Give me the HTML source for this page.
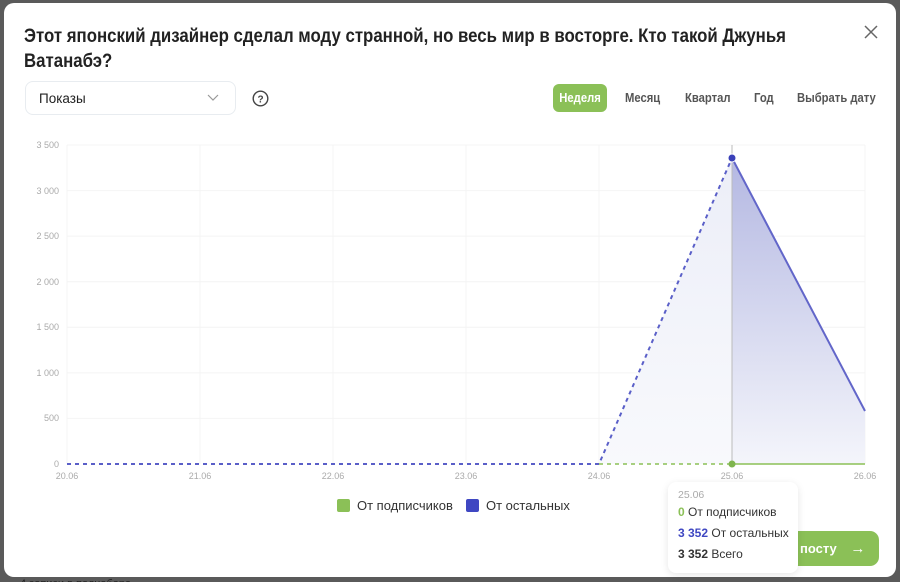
<!DOCTYPE html>
<html><head><meta charset="utf-8"><style>
*{margin:0;padding:0;box-sizing:border-box}
html,body{width:900px;height:582px;overflow:hidden}
body{background:#5a5a5a;font-family:"Liberation Sans",sans-serif;position:relative}
.m{position:absolute;left:4px;top:3px;width:892px;height:574px;background:#fff;border-radius:10px}
.t{position:absolute;left:24px;top:24px;font-size:19px;font-weight:bold;color:#222;line-height:25px;width:900px;transform:scaleX(0.885);transform-origin:0 0}
.sel{position:absolute;left:25px;top:81px;width:211px;height:34px;border:1px solid #e8ecf0;border-radius:8px;font-size:13.5px;color:#222;padding:9px 13px}
.tab{position:absolute;top:91px;font-size:12.5px;color:#555;font-weight:bold;white-space:nowrap;transform:scaleX(0.9);transform-origin:0 0}
.ax{font-size:9px;fill:#aaa;font-family:"Liberation Sans",sans-serif}
</style></head><body>
<div style="position:absolute;left:20px;top:578px;font-size:11px;color:#222">4 записи в поднабора</div>
<div class="m"></div>
<div class="t">Этот японский дизайнер сделал моду странной, но весь мир в восторге. Кто такой Джунья Ватанабэ?</div>
<svg style="position:absolute;left:864px;top:25px" width="14" height="14"><path d="M1 1L13 13M13 1L1 13" stroke="#666" stroke-width="1.5"/></svg>
<div class="sel">Показы</div>
<svg style="position:absolute;left:207px;top:94px" width="12" height="8"><path d="M1 1L6 6L11 1" stroke="#999" fill="none" stroke-width="1.2"/></svg>
<svg style="position:absolute;left:252px;top:90px" width="17" height="17"><circle cx="8.5" cy="8.5" r="7.3" stroke="#444" fill="none" stroke-width="1.4"/><text x="8.5" y="12.5" text-anchor="middle" font-size="10" font-weight="bold" fill="#444" font-family="Liberation Sans">?</text></svg>
<div style="position:absolute;left:553px;top:84px;width:54px;height:28px;background:#8bc057;border-radius:6px;color:#fff;font-size:12.5px;font-weight:bold;text-align:center;line-height:28px"><span style="display:inline-block;transform:scaleX(0.9)">Неделя</span></div>
<div class="tab" style="left:625px">Месяц</div>
<div class="tab" style="left:685px">Квартал</div>
<div class="tab" style="left:754px">Год</div>
<div class="tab" style="left:797px">Выбрать дату</div>
<svg style="position:absolute;left:0;top:0" width="900" height="582">
<defs><linearGradient id="g" x1="0" y1="0" x2="0" y2="1"><stop offset="0" stop-color="#b4b8e2"/><stop offset="1" stop-color="#f4f5fb"/></linearGradient>
<linearGradient id="g2" x1="0" y1="0" x2="0" y2="1"><stop offset="0" stop-color="#eceef8"/><stop offset="1" stop-color="#f8f9fc"/></linearGradient></defs>
<g stroke="#f4f4f4" stroke-width="1">
<line x1="67" y1="145" x2="865" y2="145"/><line x1="67" y1="190.6" x2="865" y2="190.6"/><line x1="67" y1="236.1" x2="865" y2="236.1"/><line x1="67" y1="281.7" x2="865" y2="281.7"/><line x1="67" y1="327.3" x2="865" y2="327.3"/><line x1="67" y1="372.9" x2="865" y2="372.9"/><line x1="67" y1="418.4" x2="865" y2="418.4"/>
<line x1="67" y1="145" x2="67" y2="464"/><line x1="200" y1="145" x2="200" y2="464"/><line x1="333" y1="145" x2="333" y2="464"/><line x1="466" y1="145" x2="466" y2="464"/><line x1="599" y1="145" x2="599" y2="464"/><line x1="865" y1="145" x2="865" y2="464"/>
</g>
<polygon points="599,464 732,158 732,464" fill="url(#g2)"/>
<polygon points="732,158 865,411 865,464 732,464" fill="url(#g)"/>
<line x1="732" y1="145" x2="732" y2="464" stroke="#bbb"/>
<polyline points="67,464 599,464 732,158" fill="none" stroke="#5a5fc8" stroke-width="2" stroke-dasharray="4,4"/>
<line x1="732" y1="158" x2="865" y2="411" stroke="#6266c9" stroke-width="2"/>
<line x1="599" y1="464" x2="732" y2="464" stroke="#8bc057" stroke-width="1.5" stroke-dasharray="4,4"/>
<line x1="732" y1="464" x2="865" y2="464" stroke="#8bc057" stroke-width="1.5"/>
<circle cx="732" cy="158" r="4" fill="#3a40b8" stroke="#fff" stroke-width="1"/>
<circle cx="732" cy="464" r="3.5" fill="#7fb54e"/>
<g class="ax" text-anchor="end">
<text x="59" y="148">3 500</text><text x="59" y="194">3 000</text><text x="59" y="239">2 500</text><text x="59" y="285">2 000</text><text x="59" y="330">1 500</text><text x="59" y="376">1 000</text><text x="59" y="421">500</text><text x="59" y="467">0</text></g>
<g class="ax" text-anchor="middle">
<text x="67" y="479">20.06</text><text x="200" y="479">21.06</text><text x="333" y="479">22.06</text><text x="466" y="479">23.06</text><text x="599" y="479">24.06</text><text x="732" y="479">25.06</text><text x="865" y="479">26.06</text></g>
</svg>
<div style="position:absolute;left:337px;top:499px;width:13px;height:13px;background:#8bc057;border-radius:2px"></div>
<div style="position:absolute;left:357px;top:498px;font-size:13px;color:#333">От подписчиков</div>
<div style="position:absolute;left:466px;top:499px;width:13px;height:13px;background:#3f47c2;border-radius:2px"></div>
<div style="position:absolute;left:486px;top:498px;font-size:13px;color:#333">От остальных</div>
<div style="position:absolute;left:760px;top:531px;width:119px;height:35px;background:#8bc057;border-radius:9px;color:#fff;font-size:13px;font-weight:bold;line-height:35px;padding-left:40px">посту <span style="margin-left:10px;font-size:15px">→</span></div>
<div style="position:absolute;left:668px;top:482px;width:130px;height:91px;background:#fff;border-radius:8px;box-shadow:0 2px 8px rgba(0,0,0,.1);font-size:12px;color:#333;padding:6px 10px;line-height:21px;white-space:nowrap">
<div style="color:#aaa;font-size:10.5px;line-height:14px">25.06</div>
<div><b style="color:#8bc057">0</b> От подписчиков</div>
<div><b style="color:#3f47c2">3 352</b> От остальных</div>
<div><b>3 352</b> Всего</div></div>
</body></html>
